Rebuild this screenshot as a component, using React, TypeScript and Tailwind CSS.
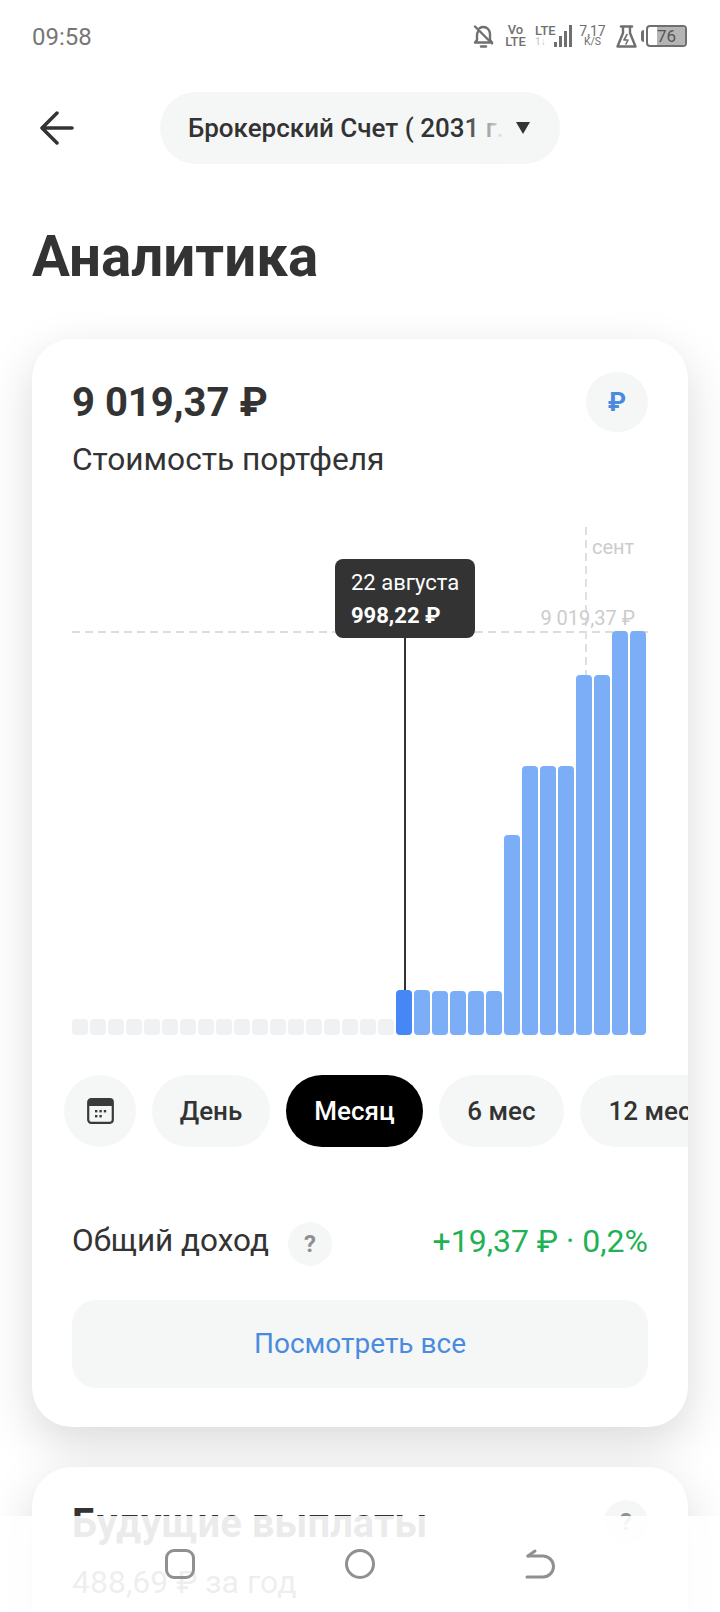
import React from "react";

const bars: { h: number; c: string }[] = [
  ...Array.from({ length: 18 }, () => ({ h: 16, c: "bg-[#f0f1f3]" })),
  { h: 45, c: "bg-[#4587f5]" },
  { h: 45, c: "bg-[#7baef7]" },
  ...[44, 44, 44, 44].map((h) => ({ h, c: "bg-[#7baef7]" })),
  { h: 200, c: "bg-[#7baef7]" },
  ...[269, 269, 269].map((h) => ({ h, c: "bg-[#7baef7]" })),
  ...[360, 360].map((h) => ({ h, c: "bg-[#7baef7]" })),
  ...[404, 404].map((h) => ({ h, c: "bg-[#7baef7]" })),
];

function BellOff() {
  return (
    <svg width="21" height="23" viewBox="0 0 21 23" fill="none" stroke="#6f6f6f" strokeWidth="2.4" strokeLinecap="round" strokeLinejoin="round">
      <path d="M5 6.5c-.6 1-1 2.2-1 3.5v5l-2 2.5h14.5" />
      <path d="M6.5 3.2C7.7 2.4 9 2 10.5 2 14 2 17 5 17 9v6l2 2.5" />
      <path d="M2 1.5 19 18.5" />
      <path d="M8 21.5h5" />
    </svg>
  );
}

function Flask() {
  return (
    <svg width="21" height="23" viewBox="0 0 21 23" fill="none" stroke="#6f6f6f" strokeWidth="2.4" strokeLinejoin="round" strokeLinecap="round">
      <path d="M5 1.5h11" />
      <path d="M7 2v6L1.5 21.5h18L14 8V2" />
      <path d="M11 9.5 8 15h4l-2 4" strokeWidth="1.6" />
    </svg>
  );
}

function StatusBar() {
  return (
    <div className="flex h-[72px] items-center justify-between pl-8 pr-[33px] text-[#6f6f6f]">
      <span className="pt-[2px] text-[24px] leading-none text-[#777777]">09:58</span>
      <div className="flex items-center">
        <BellOff />
        <div className="ml-[11px] flex w-[21px] flex-col items-center text-[13px] font-medium leading-[12px]">
          <span>Vo</span>
          <span>LTE</span>
        </div>
        <div className="ml-[9px] flex w-[22px] flex-col text-[13px] font-medium leading-[12px]">
          <span>LTE</span>
          <span className="text-[10px] leading-[10px] text-[#c8c8c8]">1↓</span>
        </div>
        <div className="-ml-[3px] flex items-end gap-[2px]">
          <span className="h-[5px] w-[3px] bg-[#6f6f6f]" />
          <span className="h-[11px] w-[3px] bg-[#6f6f6f]" />
          <span className="h-[16px] w-[3px] bg-[#6f6f6f]" />
          <span className="h-[22px] w-[3px] bg-[#6f6f6f]" />
        </div>
        <div className="ml-[7px] flex w-[27px] flex-col items-center text-[14px] leading-[12px]">
          <span>7,17</span>
          <span className="text-[10.5px] leading-[10px]">K/S</span>
        </div>
        <div className="ml-[10px]">
          <Flask />
        </div>
        <span className="ml-[4px] h-[12px] w-[3px] rounded-l-sm bg-[#6f6f6f]" />
        <div className="relative ml-[2px] flex h-[22px] w-[41px] items-center overflow-hidden rounded-[4px] border-2 border-[#6f6f6f]">
          <span className="ml-[9px] h-full w-[28px] bg-[#b5b5b5]" />
          <span className="absolute inset-0 flex items-center justify-center text-[17px] leading-none text-[#555555]">76</span>
        </div>
      </div>
    </div>
  );
}

function Header() {
  return (
    <div className="mt-5 flex h-[72px] items-center pl-10">
      <svg width="34" height="34" viewBox="0 0 34 34" fill="none" stroke="#333333" strokeWidth="3.5" strokeLinecap="round" strokeLinejoin="round">
        <path d="M32 17H2.5" />
        <path d="M17 2 2 17l15 15" />
      </svg>
      <div className="relative ml-[86px] flex h-[72px] w-[400px] items-center overflow-hidden rounded-full bg-[#f5f7f7] pl-7">
        <span className="whitespace-nowrap text-[26px] font-medium leading-none text-[#333333]">Брокерский Счет ( 2031 г.)</span>
        <div className="absolute inset-y-0 right-0 flex w-[95px] items-center justify-start">
          <div className="h-full w-[40px] bg-gradient-to-r from-[#f5f7f7]/0 to-[#f5f7f7]" />
          <div className="flex h-full flex-1 items-center bg-[#f5f7f7] pl-[11px]">
            <svg width="14" height="12" viewBox="0 0 14 12" fill="#333333">
              <path d="M0 0h14L7 12z" />
            </svg>
          </div>
        </div>
      </div>
    </div>
  );
}

function Chart() {
  return (
    <div className="relative mt-[49px] h-[508px]">
      <div className="absolute inset-x-0 top-[104px] h-[2px] bg-[repeating-linear-gradient(90deg,#dcdcdc_0_8px,transparent_8px_13px)]" />
      <div className="absolute left-[513px] top-0 h-[148px] w-[2px] bg-[repeating-linear-gradient(180deg,#e0e0e0_0_8px,transparent_8px_13px)]" />
      <span className="absolute left-[520px] top-[7px] text-[20px] leading-[26px] text-[#cccccc]">сент</span>
      <span className="absolute right-[13px] top-[78px] whitespace-nowrap text-[20px] leading-[26px] text-[#cccccc]">9 019,37 ₽</span>
      <div className="absolute inset-x-0 bottom-0 flex items-end gap-[2px]">
        {bars.map((b, i) => (
          <div key={i} className={`w-[16px] rounded-[4px] ${b.c}`} style={{ height: b.h }} />
        ))}
      </div>
      <div className="absolute left-[332px] top-[111px] h-[352px] w-[2px] bg-[#333333]" />
      <div className="absolute left-[263px] top-[32px] flex h-[79px] w-[140px] flex-col justify-center rounded-[8px] bg-[#333333] pl-4 text-[22px] leading-[33px] text-white">
        <span>22 августа</span>
        <span className="font-bold">998,22 ₽</span>
      </div>
    </div>
  );
}

function Calendar() {
  return (
    <svg width="27" height="26" viewBox="0 0 27 26" fill="none">
      <rect x="1.2" y="1.2" width="24.6" height="23.6" rx="3" stroke="#3a3a3a" strokeWidth="2.2" />
      <path d="M1 4a3 3 0 0 1 3-3h19a3 3 0 0 1 3 3v4H1z" fill="#3a3a3a" />
      <g fill="#3a3a3a">
        <rect x="8" y="12" width="2.4" height="2.4" />
        <rect x="12.4" y="12" width="2.4" height="2.4" />
        <rect x="16.8" y="12" width="2.4" height="2.4" />
        <rect x="8" y="17" width="2.4" height="2.4" />
        <rect x="12.4" y="17" width="2.4" height="2.4" />
      </g>
    </svg>
  );
}

function Periods() {
  const pill = "flex h-[72px] shrink-0 items-center justify-center rounded-full text-[26px] font-medium leading-none";
  return (
    <div className="-ml-2 -mr-10 mt-10 flex gap-4">
      <div className={`${pill} w-[72px] bg-[#f5f7f7]`}>
        <Calendar />
      </div>
      <div className={`${pill} w-[118px] bg-[#f5f7f7] text-[#333333]`}>День</div>
      <div className={`${pill} w-[137px] bg-black text-white`}>Месяц</div>
      <div className={`${pill} w-[125px] bg-[#f5f7f7] text-[#333333]`}>6 мес</div>
      <div className={`${pill} w-[140px] bg-[#f5f7f7] text-[#333333]`}>12 мес</div>
    </div>
  );
}

function Income() {
  return (
    <div className="mt-[75px] flex h-[44px] items-center justify-between">
      <div className="flex items-center">
        <span className="-mt-[6px] text-[31.5px] leading-none text-[#333333]">Общий доход</span>
        <span className="ml-[19px] flex h-[44px] w-[44px] items-center justify-center rounded-full bg-[#f5f7f7] text-[24px] font-bold leading-none text-[#8f8f8f]">?</span>
      </div>
      <span className="-mt-[6px] whitespace-nowrap text-[32px] leading-none text-[#1fb254]">+19,37 ₽ · 0,2%</span>
    </div>
  );
}

export default function App() {
  return (
    <div className="relative h-[1612px] w-[720px] overflow-hidden bg-white font-['Roboto',sans-serif]">
      <StatusBar />
      <Header />
      <h1 className="ml-8 mt-[63px] text-[56.5px] font-bold leading-[60px] text-[#333333]">Аналитика</h1>
      <section className="mx-8 mt-[52px] h-[1088px] overflow-hidden rounded-[40px] bg-white px-10 pt-[33px] shadow-[0_16px_48px_rgba(0,0,0,0.15)]">
        <div className="flex items-start justify-between">
          <div>
            <div className="mt-[9px] text-[40px] font-bold leading-[44px] text-[#333333]">9 019,37 ₽</div>
            <div className="mt-[17px] text-[31.7px] leading-[36px] text-[#333333]">Стоимость портфеля</div>
          </div>
          <div className="flex h-[60px] w-[62px] items-center justify-center rounded-full bg-[#f5f7f7] text-[26px] font-bold leading-none text-[#4a8be0]">₽</div>
        </div>
        <Chart />
        <Periods />
        <Income />
        <button className="mt-[34px] flex h-[88px] w-full items-center justify-center rounded-[24px] bg-[#f5f7f7] text-[28px] leading-none text-[#4a8be0]">Посмотреть все</button>
      </section>
      <section className="mx-8 mt-10 h-[300px] rounded-[40px] bg-white px-10 pt-[33px] shadow-[0_16px_48px_rgba(0,0,0,0.15)]">
        <div className="flex items-start justify-between">
          <div className="text-[40px] font-bold leading-[48px] text-[#333333]">Будущие выплаты</div>
          <div className="flex h-[44px] w-[44px] items-center justify-center rounded-full bg-[#f5f7f7] text-[24px] font-bold leading-none text-[#8f8f8f]">?</div>
        </div>
        <div className="mt-[16px] text-[32px] leading-[36px] text-[#555555]">488,69 ₽ за год</div>
      </section>
      <nav className="absolute inset-x-0 bottom-0 flex h-[96px] items-start justify-center bg-white/90 pt-[33px]">
        <div className="flex w-[180px] justify-center">
          <div className="h-[30px] w-[30px] rounded-[9px] border-[3px] border-[#909090]" />
        </div>
        <div className="flex w-[180px] justify-center">
          <div className="h-[30px] w-[30px] rounded-full border-[3px] border-[#909090]" />
        </div>
        <div className="flex w-[180px] justify-center">
          <svg width="30" height="30" viewBox="0 0 30 30" fill="none" stroke="#909090" strokeWidth="3" strokeLinecap="round" strokeLinejoin="round">
            <path d="M2 28h16a10.5 10.5 0 0 0 0-21H3" />
            <path d="M10 2 3 7" />
          </svg>
        </div>
      </nav>
    </div>
  );
}
